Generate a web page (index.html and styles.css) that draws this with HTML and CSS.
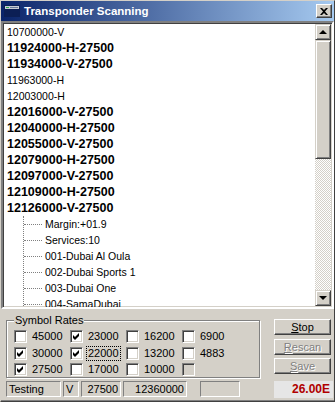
FILE: index.html
```html
<!DOCTYPE html>
<html lang="en">
<head>
    <meta charset="UTF-8">
    <title>Transponder Scanning</title>
    <link rel="stylesheet" href="styles.css">
</head>
<body>
<div class="window">
    <div class="titlebar">
        <svg class="app-icon" width="16" height="16" viewBox="0 0 16 16">
            <rect x="0" y="2" width="16" height="12" fill="#0c1f55"/>
            <rect x="1" y="3" width="14" height="3" fill="#c8ccd4"/>
            <rect x="2" y="4" width="3" height="1" fill="#2ea84a"/>
            <rect x="6" y="4" width="8" height="1" fill="#6a7a98"/>
        </svg>
        <span class="title">Transponder Scanning</span>
        <div class="close">
            <svg width="8" height="7" viewBox="0 0 8 7">
                <path d="M0 0h2l2 2 2-2h2L5 3.5 8 7H6L4 5 2 7H0l3-3.5z" fill="#000"/>
            </svg>
        </div>
    </div>

    <div class="list">
        <div class="items">
            <div class="row">10700000-V</div>
            <div class="row b">11924000-H-27500</div>
            <div class="row b">11934000-V-27500</div>
            <div class="row">11963000-H</div>
            <div class="row">12003000-H</div>
            <div class="row b">12016000-V-27500</div>
            <div class="row b">12040000-H-27500</div>
            <div class="row b">12055000-V-27500</div>
            <div class="row b">12079000-H-27500</div>
            <div class="row b">12097000-V-27500</div>
            <div class="row b">12109000-H-27500</div>
            <div class="row b">12126000-V-27500</div>
            <div class="children">
                <div class="child">Margin:+01.9</div>
                <div class="child">Services:10</div>
                <div class="child">001-Dubai Al Oula</div>
                <div class="child">002-Dubai Sports 1</div>
                <div class="child">003-Dubai One</div>
                <div class="child">004-SamaDubai</div>
            </div>
        </div>
        <div class="scrollbar">
            <div class="sb-btn"><span class="arrow-up"></span></div>
            <div class="sb-thumb"></div>
            <div class="sb-track"></div>
            <div class="sb-btn"><span class="arrow-down"></span></div>
        </div>
    </div>

    <div class="bottom">
        <div class="left">
            <fieldset class="rates">
                <legend>Symbol Rates</legend>
                <div class="grid">
                    <div class="cb"><span class="box"></span>45000</div>
                    <div class="cb"><span class="box checked"></span>23000</div>
                    <div class="cb"><span class="box"></span>16200</div>
                    <div class="cb"><span class="box"></span>6900</div>
                    <div class="cb"><span class="box checked"></span>30000</div>
                    <div class="cb"><span class="box checked"></span><span class="focus">22000</span></div>
                    <div class="cb"><span class="box"></span>13200</div>
                    <div class="cb"><span class="box"></span>4883</div>
                    <div class="cb"><span class="box checked"></span>27500</div>
                    <div class="cb"><span class="box"></span>17000</div>
                    <div class="cb"><span class="box"></span>10000</div>
                    <div class="cb"><span class="box disabled"></span></div>
                </div>
            </fieldset>
            <div class="status">
                <div class="panel p-state">Testing</div>
                <div class="panel p-pol">V</div>
                <div class="panel p-sr">27500</div>
                <div class="panel p-freq">12360000</div>
                <div class="panel p-empty"></div>
            </div>
        </div>
        <div class="right">
            <div class="btn"><u>S</u>top</div>
            <div class="btn disabled"><u>R</u>escan</div>
            <div class="btn disabled"><u>S</u>ave</div>
            <div class="position">26.00E</div>
        </div>
    </div>
</div>
</body>
</html>
```

FILE: styles.css
```css
body {
    margin: 0;
    font-family: "Liberation Sans", Arial, sans-serif;
    font-size: 11px;
    color: #000;
}
.window {
    width: 335px;
    height: 402px;
    box-sizing: border-box;
    background: #d4d0c8;
    border: 1px solid;
    border-color: #d4d0c8 #404040 #404040 #d4d0c8;
    box-shadow: inset 0 -1px #808080;
    overflow: hidden;
}

/* title bar */
.titlebar {
    height: 20px;
    display: flex;
    align-items: center;
    padding-left: 3px;
    background: linear-gradient(to right, #0a246a, #a6caf0);
}
.app-icon {
    display: block;
}
.title {
    margin-left: 4px;
    color: #fff;
    font-weight: bold;
    font-size: 11.5px;
}
.close {
    margin-left: auto;
    margin-right: 2px;
    width: 16px;
    height: 14px;
    box-sizing: border-box;
    display: flex;
    align-items: center;
    justify-content: center;
    background: #d4d0c8;
    border: 1px solid;
    border-color: #fff #404040 #404040 #fff;
    box-shadow: inset -1px -1px #808080;
}

/* list */
.list {
    height: 288px;
    box-sizing: border-box;
    display: flex;
    background: #fff;
    border: 2px solid;
    border-color: #808080 #fff #fff #808080;
    box-shadow: inset 1px 1px #404040, inset -1px -1px #d4d0c8;
}
.items {
    flex: 1;
    overflow: hidden;
    padding: 1px 0 0 4px;
}
.row,
.child {
    height: 16px;
    line-height: 16px;
    white-space: nowrap;
    font-size: 10.5px;
}
.row.b {
    font-weight: bold;
    font-size: 12.5px;
}
.children {
    margin-left: 16px;
    border-left: 1px dotted #808080;
}
.child {
    position: relative;
    padding-left: 21px;
}
.child::before {
    content: "";
    position: absolute;
    left: 0;
    top: 8px;
    width: 18px;
    border-top: 1px dotted #808080;
}

.scrollbar {
    width: 16px;
    display: flex;
    flex-direction: column;
    margin: 1px 1px 1px 0;
}
.sb-btn,
.sb-thumb {
    box-sizing: border-box;
    background: #d4d0c8;
    border: 1px solid;
    border-color: #d4d0c8 #404040 #404040 #d4d0c8;
    box-shadow: inset 1px 1px #fff, inset -1px -1px #808080;
}
.sb-btn {
    height: 16px;
    display: flex;
    align-items: center;
    justify-content: center;
}
.sb-thumb {
    height: 119px;
}
.sb-track {
    flex: 1;
    background: repeating-conic-gradient(#fff 0 25%, #d4d0c8 0 50%) 0 0 / 2px 2px;
}
.arrow-up {
    border-left: 4px solid transparent;
    border-right: 4px solid transparent;
    border-bottom: 4px solid #000;
}
.arrow-down {
    border-left: 4px solid transparent;
    border-right: 4px solid transparent;
    border-top: 4px solid #000;
}

/* bottom panel */
.bottom {
    display: flex;
    padding-left: 5px;
}
.left {
    width: 254px;
}
.rates {
    margin: 5px 0 0;
    padding: 4px 0 1px 7px;
    min-width: 0;
    border: 1px solid #808080;
    box-shadow: inset 1px 1px #fff, 1px 1px 0 #fff;
}
.rates legend {
    position: relative;
    padding: 0 1px;
    line-height: 12px;
    background: #d4d0c8;
}
.grid {
    display: grid;
    grid-template-columns: repeat(4, 56px);
    grid-auto-rows: 13px;
    row-gap: 3.5px;
}
.cb {
    display: flex;
    align-items: center;
    gap: 5px;
    line-height: 13px;
}
.box {
    width: 13px;
    height: 13px;
    box-sizing: border-box;
    flex: none;
    background: #fff;
    border: 1px solid;
    border-color: #808080 #fff #fff #808080;
    box-shadow: inset 1px 1px #404040, inset -1px -1px #d4d0c8;
}
.box.checked {
    background: #fff url("data:image/svg+xml,%3Csvg xmlns='http://www.w3.org/2000/svg' width='7' height='7'%3E%3Cpath d='M0 2l2 2 4-4v3L2 7 0 5z' fill='%23000'/%3E%3C/svg%3E") 2px 2px no-repeat;
}
.box.disabled {
    background: #d4d0c8;
}
.focus {
    outline: 1px dotted #000;
    padding: 0 1px;
    margin-left: -1px;
}

.status {
    display: flex;
    margin-top: 3px;
    gap: 2px;
}
.panel {
    height: 16px;
    box-sizing: border-box;
    border: 1px solid;
    border-color: #808080 #fff #fff #808080;
    line-height: 14px;
    padding: 0 2px;
    white-space: nowrap;
}
.p-state { width: 55px; }
.p-pol { width: 16px; }
.p-sr { width: 40px; text-align: right; }
.p-freq { width: 64px; text-align: right; }
.p-empty { width: 40px; margin-left: 11px; }

.right {
    margin-left: 14px;
    padding-top: 10px;
    display: flex;
    flex-direction: column;
    gap: 3.5px;
}
.btn {
    width: 57px;
    height: 16px;
    box-sizing: border-box;
    text-align: center;
    line-height: 14px;
    border: 1px solid;
    border-color: #fff #404040 #404040 #fff;
    box-shadow: inset -1px -1px #808080;
}
.btn.disabled {
    color: #808080;
    text-shadow: 1px 1px #fff;
}
.position {
    margin-top: 3px;
    width: 59px;
    height: 17px;
    background: #e6e6e6;
    color: #b00000;
    font-weight: bold;
    font-size: 12px;
    line-height: 17px;
    text-align: right;
    padding-right: 3px;
    box-sizing: border-box;
}
```
